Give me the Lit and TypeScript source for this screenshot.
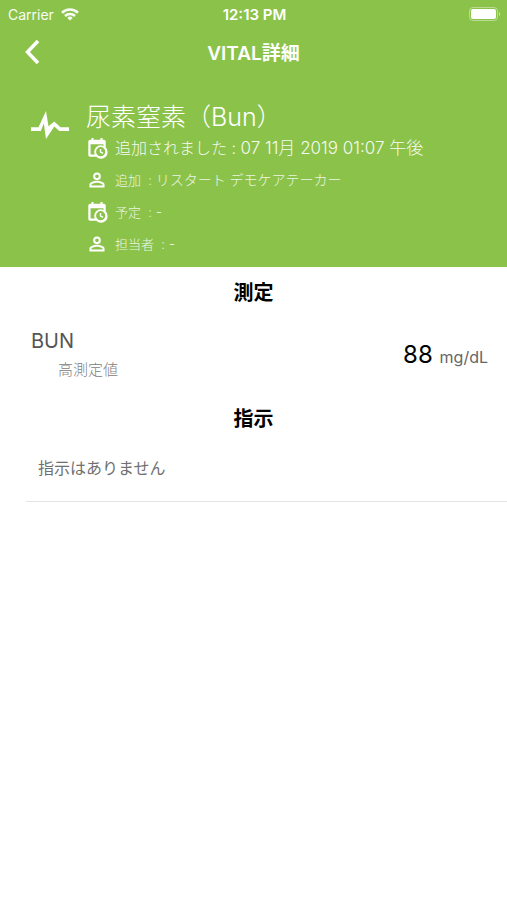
import { LitElement, html, css, svg } from "lit";
import { customElement } from "lit/decorators.js";

const calendarClock = svg`
  <path fill-rule="evenodd" d="M15 13h1.600v2.700l2.400 1.400-.9 1.400-3.100-1.800V13zm4-5H5v11h4.700A7 7 0 0 1 19 9.700V8zM4.500 21.500A2 2 0 0 1 2.500 19.500V5a2 2 0 0 1 2-2H6V1h2.200v2h7.600V1H18v2h1.500a2 2 0 0 1 2 2v6.100A7.200 7.200 0 1 1 11.100 21.500H4.500zM16 11a5 5 0 1 0 0 10 5 5 0 0 0 0-10z"/>`;
const person = svg`
  <path fill-rule="evenodd" d="M12 3.800a4.200 4.200 0 1 1 0 8.400 4.200 4.200 0 0 1 0-8.400zm0 2.200a2 2 0 1 0 0 4 2 2 0 0 0 0-4zm0 6.900c2.700 0 8.200 1.300 8.200 4.100v3.200H3.800V17c0-2.800 5.500-4.100 8.200-4.100zm0 2.100c-3 0-6 1.400-6 2v1h12v-1c0-.600-3-2-6-2z"/>`;

const details = [
  { icon: calendarClock, label: "追加されました : ", value: "07 11月 2019 01:07 午後", large: true },
  { icon: person, label: "追加  : ", value: "リスタート デモケアテーカー", large: false },
  { icon: calendarClock, label: "予定  : ", value: "-", large: false },
  { icon: person, label: "担当者  : ", value: "-", large: false },
];

@customElement("app-root")
export class AppRoot extends LitElement {
  static styles = css`
    :host {
      display: block;
      min-height: 100vh;
      background: #fff;
      color: #000;
      font-family: Inter, "Noto Sans CJK JP", sans-serif;
    }
    * { box-sizing: border-box; }
    h1, h2, h3, p, ul { margin: 0; padding: 0; }
    svg { display: block; flex: none; }
    .top {
      background: #8bc34a;
      color: #fff;
      padding-bottom: 7px;
    }
    .status, .nav {
      display: grid;
      grid-template-columns: 1fr auto 1fr;
      align-items: center;
    }
    .status {
      height: 28px;
      padding: 0 6px 0 8px;
      font-size: 14px;
    }
    .carrier { display: flex; align-items: center; gap: 7px; opacity: 0.95; }
    .time { font-size: 15px; font-weight: 600; }
    .battery { justify-self: end; }
    .nav { height: 48px; }
    .back {
      width: 32px;
      height: 40px;
      margin-left: 16px;
      padding: 0;
      border: 0;
      background: none;
      color: inherit;
      display: grid;
      place-items: center;
      cursor: pointer;
    }
    .title { font-size: 19px; font-weight: 600; line-height: 28px; padding-top: 3px; }
    .summary { display: flex; padding: 26px 16px 0 31px; gap: 17px; }
    .pulse { margin-top: 9px; }
    .name { font-size: 25px; font-weight: 300; line-height: 30px; }
    .details { list-style: none; }
    .detail {
      display: flex;
      align-items: center;
      gap: 7px;
      height: 32px;
      font-size: 13px;
      line-height: 20px;
      font-weight: 300;
      white-space: pre;
    }
    .text { opacity: 0.85; }
    .detail .value { font-size: 14px; line-height: 20px; }
    .detail.large { font-size: 16px; line-height: 24px; }
    .detail.large .text { opacity: 0.92; }
    .detail.large .value { font-size: 17px; line-height: 24px; }
    .heading {
      text-align: center;
      font-size: 20px;
      font-weight: 700;
      line-height: 32px;
      padding-top: 10px;
    }
    .measure {
      display: flex;
      justify-content: space-between;
      align-items: center;
      padding: 17px 19px 9px 31px;
    }
    .label { font-size: 20px; font-weight: 400; line-height: 30px; color: #555; }
    .note { font-size: 15px; line-height: 28px; padding-left: 27px; color: #808080; font-weight: 300; }
    .reading { font-size: 24px; line-height: 32px; padding-top: 2px; }
    .unit { font-size: 16px; color: #666; }
    .empty {
      margin-left: 26px;
      padding: 21px 12px;
      border-bottom: 1px solid #e4e4e4;
      font-size: 16px;
      line-height: 24px;
      color: #707070;
    }
  `;

  render() {
    return html`
      <header class="top">
        <div class="status">
          <div class="carrier">
            <span>Carrier</span>
            <svg width="18" height="13" viewBox="0 0 18 13" fill="none" stroke="#fff" stroke-width="2.600" aria-hidden="true">
              <path d="M1 4.700a11.500 11.500 0 0 1 16 0M4 8a7.200 7.200 0 0 1 10 0" />
              <path d="M9 12.500 6.300 9.900a3.900 3.900 0 0 1 5.400 0z" fill="#fff" stroke="none" />
            </svg>
          </div>
          <span class="time">12:13 PM</span>
          <svg class="battery" width="32" height="14" viewBox="0 0 32 14" aria-hidden="true">
            <rect x=".5" y=".5" width="28" height="13" rx="3.500" fill="none" stroke="#fff" stroke-opacity=".4" />
            <rect x="2" y="2" width="25" height="10" rx="2" fill="#fff" />
            <path d="M30 5v4a2.200 2.200 0 0 0 0-4z" fill="#fff" fill-opacity=".5" />
          </svg>
        </div>
        <nav class="nav">
          <button class="back" aria-label="戻る">
            <svg width="16" height="26" viewBox="0 0 16 26" fill="none" stroke="#fff" stroke-width="3.500" aria-hidden="true">
              <path d="M14 2 3.500 13 14 24" />
            </svg>
          </button>
          <h1 class="title">VITAL詳細</h1>
        </nav>
        <section class="summary">
          <svg class="pulse" width="38" height="28" viewBox="0 0 38 28" fill="#fff" aria-hidden="true">
            <path d="M0 16.200h7.500L15 0l2.500 15.300 5.800-4.800 6.200 5.700H38V20h-9.700l-5-4.500L15 28l-2.200-15.500L9.800 20H0z" />
          </svg>
          <div>
            <h2 class="name">尿素窒素（Bun）</h2>
            <ul class="details">
              ${details.map(
                (d) => html`<li class="detail ${d.large ? "large" : ""}"><svg width="22" height="22" viewBox="0 0 24 24" fill="#fff" aria-hidden="true">${d.icon}</svg><span class="text">${d.label}<span class="value">${d.value}</span></span></li>`
              )}
            </ul>
          </div>
        </section>
      </header>
      <main>
        <h2 class="heading">測定</h2>
        <section class="measure">
          <div>
            <h3 class="label">BUN</h3>
            <p class="note">高測定値</p>
          </div>
          <p class="reading">88 <span class="unit">mg/dL</span></p>
        </section>
        <h2 class="heading">指示</h2>
        <p class="empty">指示はありません</p>
      </main>
    `;
  }
}
